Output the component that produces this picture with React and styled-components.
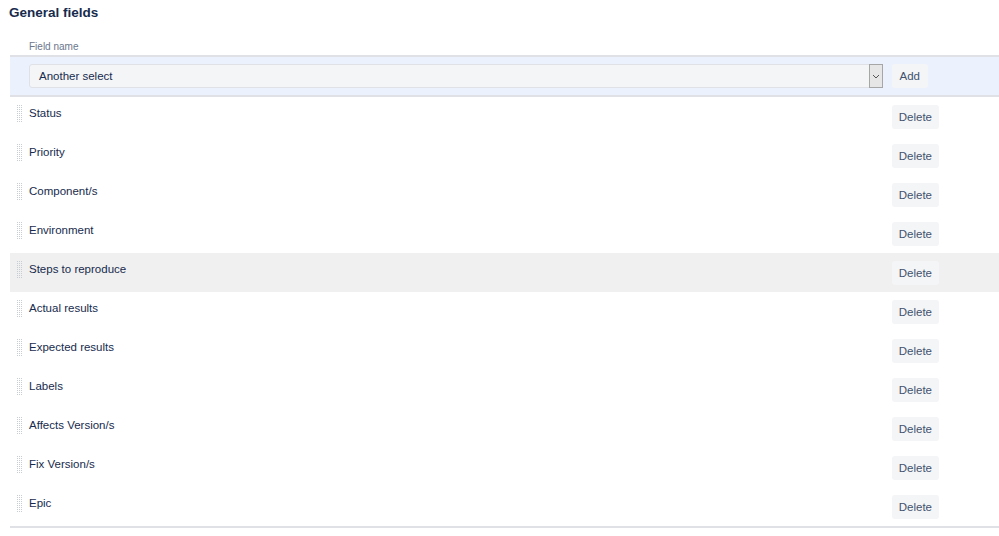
import React from "react";
import styled, { createGlobalStyle } from "styled-components";

const Global = createGlobalStyle`
  html, body { margin: 0; padding: 0; background: #fff; }
  body { font-family: "Liberation Sans", Arial, sans-serif; color: #172b4d; }
`;

const Page = styled.div`
  padding: 5px 0 0 10px;
`;

const Title = styled.h2`
  margin: 0 0 0 -1px;
  font-size: 13.5px;
  font-weight: bold;
  line-height: 16px;
  color: #172b4d;
`;

const Label = styled.div`
  margin: 19px 0 0 19px;
  font-size: 10px;
  line-height: 13px;
  color: #6b778c;
`;

const AddRow = styled.div`
  margin-top: 2px;
  height: 38px;
  border-top: 2px solid #dfe1e6;
  border-bottom: 2px solid #dfe1e6;
  background: #ebf2fe;
  display: flex;
  align-items: center;
  padding: 0 71px 0 19px;
  gap: 9px;
`;

const Select = styled.div`
  flex: 1;
  height: 24px;
  box-sizing: border-box;
  border: 1px solid #dfe1e6;
  border-radius: 3px;
  background: #f4f5f7;
  display: flex;
  align-items: center;
  font-size: 11.5px;
  color: #172b4d;
  padding-left: 9px;
`;

const SelectText = styled.span`
  flex: 1;
`;

const Arrow = styled.span`
  width: 14px;
  height: 24px;
  box-sizing: border-box;
  margin: -1px -1px -1px 0;
  border: 1px solid #a6a6a6;
  background: #e6e6e6;
  display: flex;
  align-items: center;
  justify-content: center;
`;

const Button = styled.button`
  font-family: "Liberation Sans", Arial, sans-serif;
  font-size: 11.5px;
  color: #42526e;
  background: #f4f5f7;
  border: none;
  border-radius: 3px;
  height: 24px;
  padding: 0 ${(p) => p.$pad || 8}px;
  cursor: pointer;
`;

const List = styled.div`
  border-bottom: 2px solid #dfe1e6;
`;

const Row = styled.div`
  height: 39px;
  box-sizing: border-box;
  display: flex;
  align-items: flex-start;
  padding: 8px 60px 0 6px;
  background: ${(p) => (p.$hover ? "#f0f0f0" : "#fff")};
`;

const Handle = styled.span`
  width: 6px;
  height: 18px;
  margin-top: -1px;
  flex: none;
  background-color: #c8ccd3;
  background-image:
    linear-gradient(to right, ${(p) => p.$bg} 1px, transparent 1px),
    linear-gradient(to bottom, ${(p) => p.$bg} 1px, transparent 1px);
  background-size: 2px 2px;
`;

const Name = styled.span`
  flex: 1;
  margin-left: 7px;
  font-size: 11.5px;
  line-height: 16px;
  color: #172b4d;
`;

const fields = [
  "Status",
  "Priority",
  "Component/s",
  "Environment",
  "Steps to reproduce",
  "Actual results",
  "Expected results",
  "Labels",
  "Affects Version/s",
  "Fix Version/s",
  "Epic",
];

export default function App() {
  return (
    <Page>
      <Global />
      <Title>General fields</Title>
      <Label>Field name</Label>
      <AddRow>
        <Select>
          <SelectText>Another select</SelectText>
          <Arrow>
            <svg width="8" height="5" viewBox="0 0 8 5">
              <path d="M1 1l3 3 3-3" fill="none" stroke="#555" strokeWidth="1" />
            </svg>
          </Arrow>
        </Select>
        <Button $pad={8}>Add</Button>
      </AddRow>
      <List>
        {fields.map((f, i) => (
          <Row key={f} $hover={i === 4}>
            <Handle $bg={i === 4 ? "#f0f0f0" : "#fff"} />
            <Name>{f}</Name>
            <Button $pad={7}>Delete</Button>
          </Row>
        ))}
      </List>
    </Page>
  );
}
